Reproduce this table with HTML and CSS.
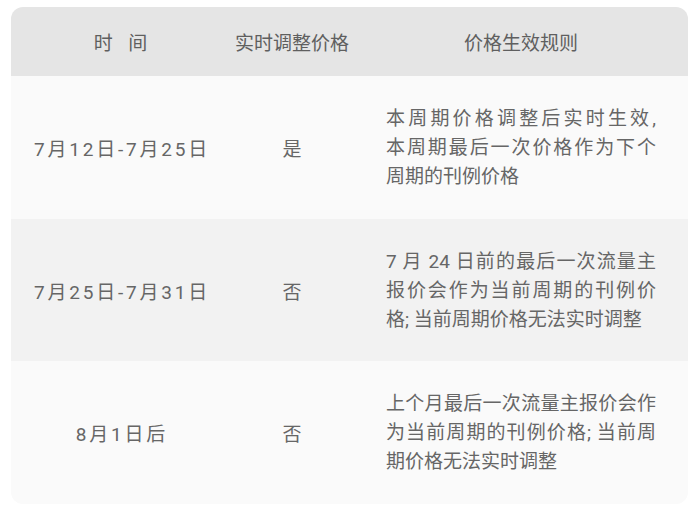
FILE: index.html
```html
<!DOCTYPE html>
<html lang="zh-CN">
<head>
<meta charset="utf-8">
<link rel="stylesheet" href="styles.css">
</head>
<body>
<div class="page">
  <div class="table">
    <div class="row head">
      <div class="cell c1 title">时&nbsp;&nbsp;间</div>
      <div class="cell c2">实时调整价格</div>
      <div class="cell c3">价格生效规则</div>
    </div>
    <div class="row light">
      <div class="cell c1 date">7月12日-7月25日</div>
      <div class="cell c2">是</div>
      <div class="cell c3 rule">
        <span class="ln">本周期价格调整后实时生效,</span>
        <span class="ln">本周期最后一次价格作为下个</span>
        <span class="ln last">周期的刊例价格</span>
      </div>
    </div>
    <div class="row dark">
      <div class="cell c1 date">7月25日-7月31日</div>
      <div class="cell c2">否</div>
      <div class="cell c3 rule">
        <span class="ln">7 月 24 日前的最后一次流量主</span>
        <span class="ln">报价会作为当前周期的刊例价</span>
        <span class="ln last">格; 当前周期价格无法实时调整</span>
      </div>
    </div>
    <div class="row light">
      <div class="cell c1 date">8月1日后</div>
      <div class="cell c2">否</div>
      <div class="cell c3 rule">
        <span class="ln">上个月最后一次流量主报价会作</span>
        <span class="ln">为当前周期的刊例价格; 当前周</span>
        <span class="ln last">期价格无法实时调整</span>
      </div>
    </div>
  </div>
</div>
</body>
</html>
```

FILE: styles.css
```css
html, body {
  margin: 0;
  padding: 0;
  background: #ffffff;
}

.page {
  padding: 7px 11px 6px 11px;
}

.table {
  border-radius: 12px;
  overflow: hidden;
  font-family: Roboto, "Noto Sans CJK SC", sans-serif;
  font-size: 19px;
  color: #666666;
}

.row {
  display: grid;
  grid-template-columns: 219px 124px 1fr;
  height: 143px;
}

.row.head {
  height: 69px;
  background: #e5e5e5;
  color: #5f5f5f;
}

.row.light {
  background: #fafafa;
}

.row.dark {
  background: #f2f2f2;
  height: 142px;
}

.cell {
  display: flex;
  align-items: center;
  justify-content: center;
  text-align: center;
}

.title {
  letter-spacing: 2px;
  padding-left: 2px;
}

.date {
  letter-spacing: 2.8px;
  padding-left: 3px;
}

.rule {
  flex-direction: column;
  align-items: stretch;
  padding: 0 32px;
  line-height: 29px;
}

.ln {
  display: block;
  text-align: justify;
  text-align-last: justify;
}

.ln.last {
  text-align: left;
  text-align-last: left;
}
```
